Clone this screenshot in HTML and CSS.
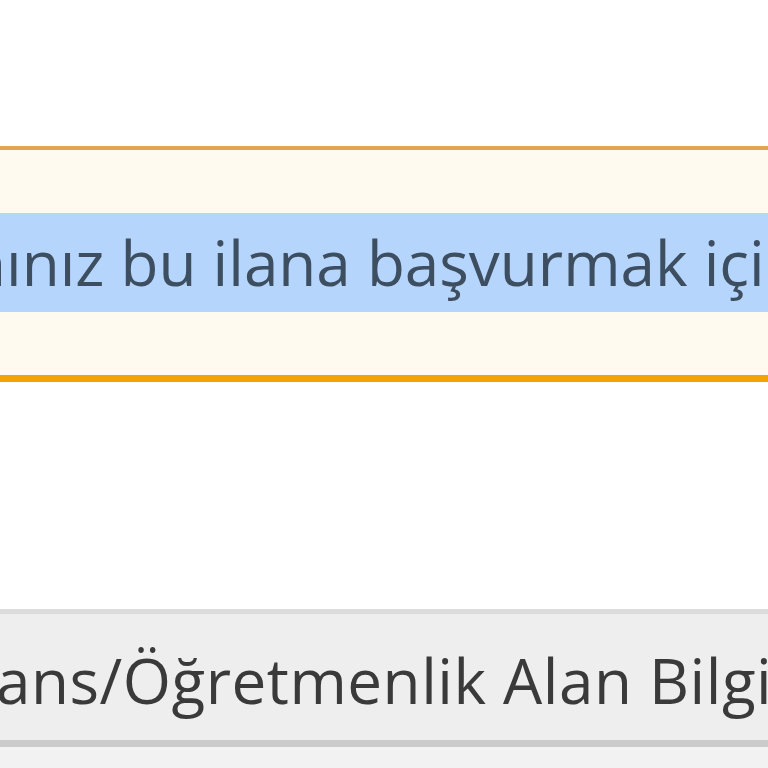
FILE: index.html
```html
<!DOCTYPE html>
<html lang="tr">
<head>
<meta charset="utf-8">
<title>Başvuru</title>
<link rel="stylesheet" href="styles.css">
</head>
<body>
<div class="top-space"></div>
<div class="alert">
  <div class="alert-line">nınız bu ilana başvurmak için</div>
</div>
<div class="gap"></div>
<div class="section-bar">
  <div class="section-title">ans/Öğretmenlik Alan Bilgileri</div>
</div>
<div class="below"></div>
</body>
</html>
```
FILE: styles.css
```css
html, body {
  margin: 0;
  padding: 0;
  background: #ffffff;
  overflow: hidden;
  font-family: "Open Sans", "Noto Sans", sans-serif;
}
.top-space {
  height: 146px;
}
.alert {
  border-top: 4px solid #e4a450;
  border-bottom: 7px solid #f3a200;
  background: #fffaf0;
  padding: 63px 0 63px;
}
.alert-line {
  height: 99px;
  line-height: 99px;
  background: #b5d5fc;
  color: #3d4e60;
  font-size: 62px;
  white-space: nowrap;
  overflow: hidden;
  text-indent: -32px;
}
.gap {
  height: 227px;
}
.section-bar {
  border-top: 5px solid #dcdcdc;
  border-bottom: 7px solid #cbcbcb;
  background: #eeeeee;
  height: 126px;
  box-sizing: content-box;
}
.section-title {
  padding-top: 24px;
  line-height: 84px;
  color: #3a3a3a;
  font-size: 62px;
  letter-spacing: 0.5px;
  white-space: nowrap;
  overflow: hidden;
  text-indent: -4px;
}
.below {
  height: 40px;
  background: #f2f2f2;
}
```
